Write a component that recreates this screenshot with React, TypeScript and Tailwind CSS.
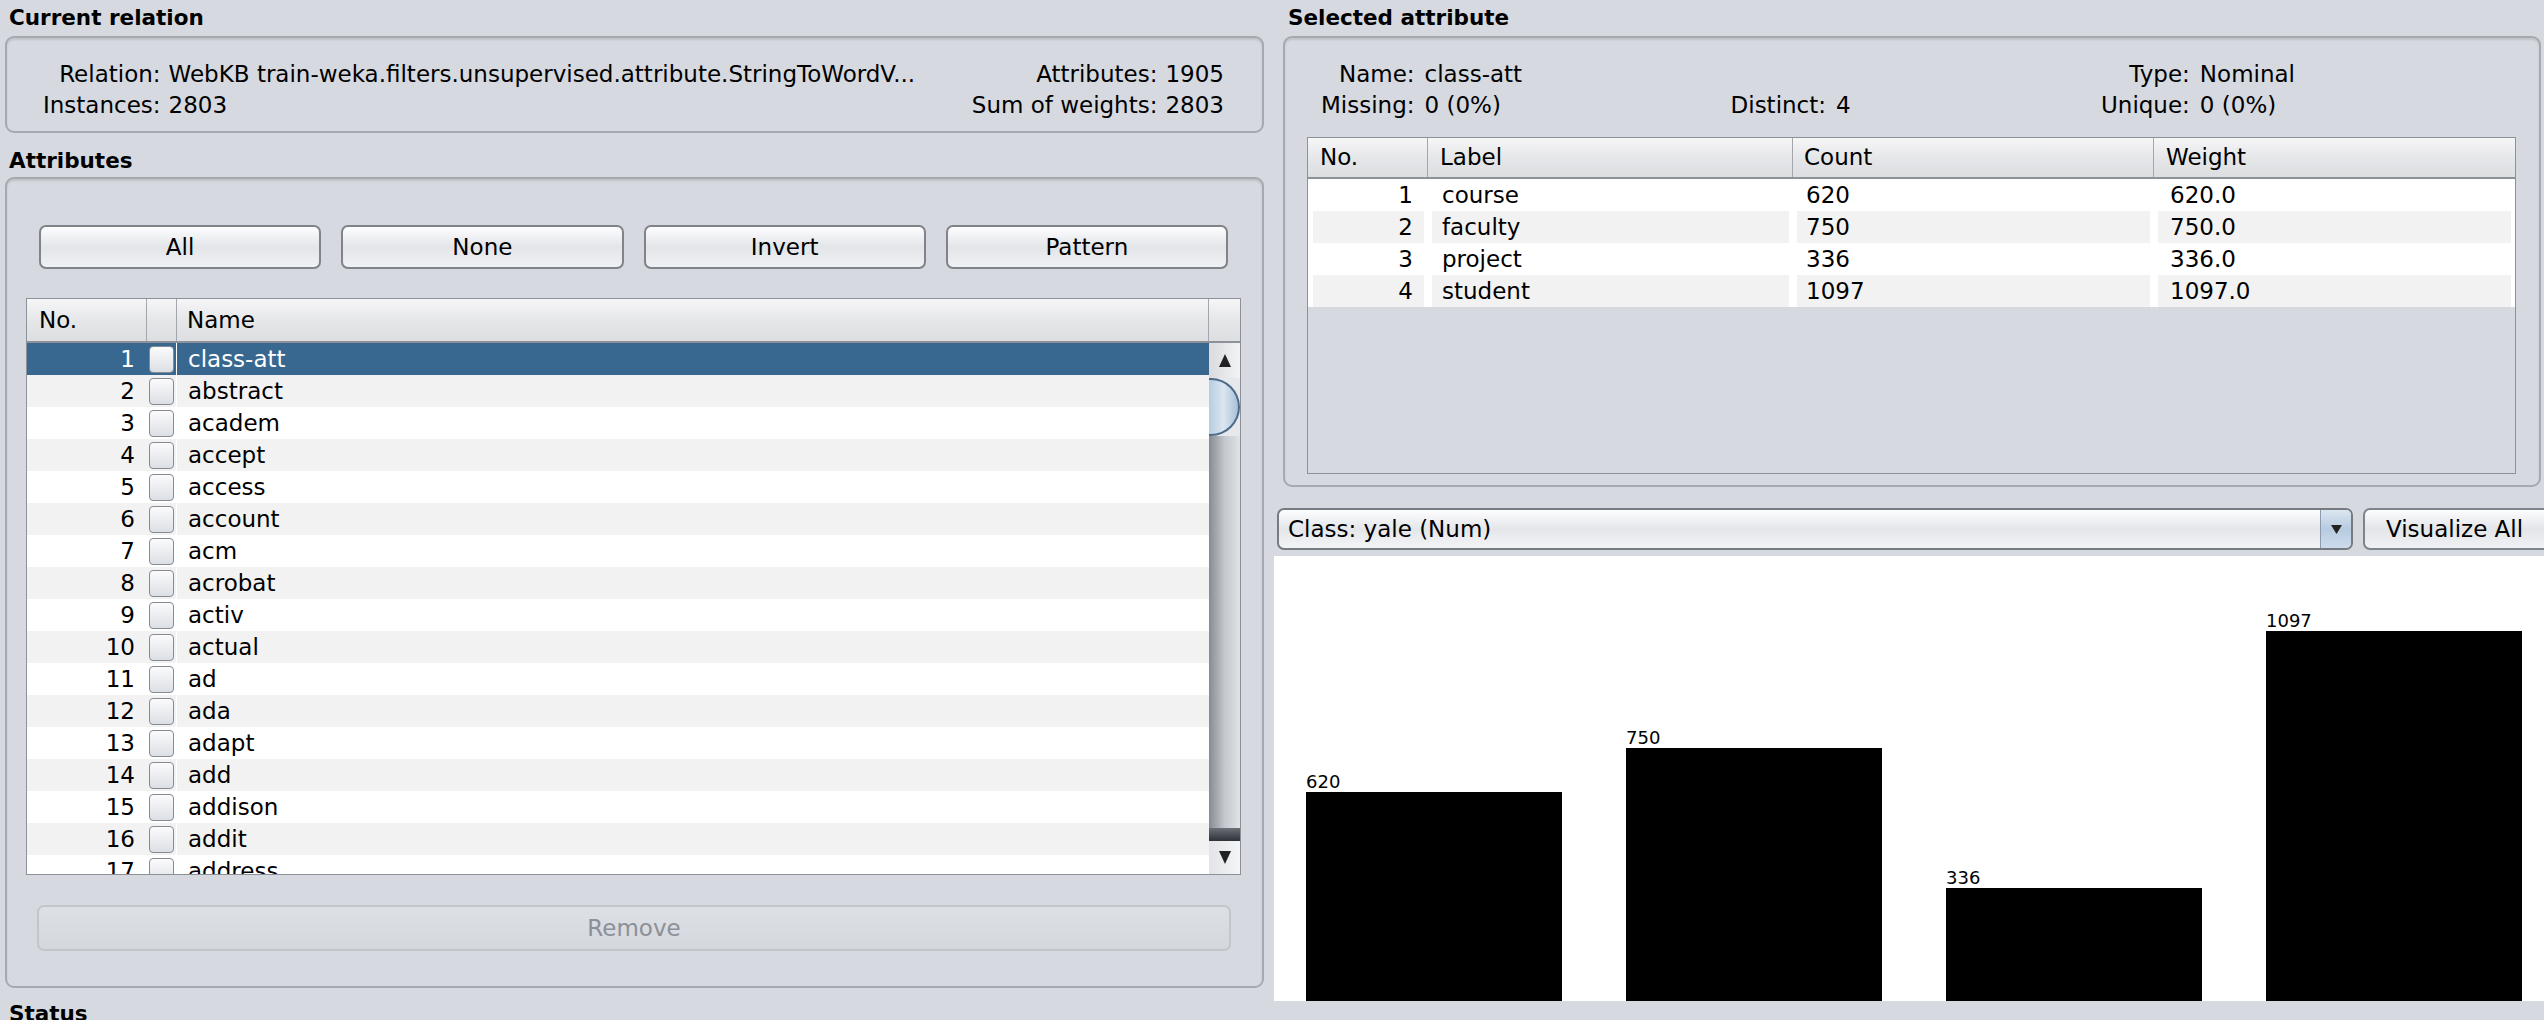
import React from 'react';

const attributes = [
  'class-att', 'abstract', 'academ', 'accept', 'access', 'account', 'acm', 'acrobat', 'activ',
  'actual', 'ad', 'ada', 'adapt', 'add', 'addison', 'addit', 'address',
];

const labels = [
  { no: 1, label: 'course', count: 620, weight: '620.0' },
  { no: 2, label: 'faculty', count: 750, weight: '750.0' },
  { no: 3, label: 'project', count: 336, weight: '336.0' },
  { no: 4, label: 'student', count: 1097, weight: '1097.0' },
];

const maxCount = 1097;

function Title({ children, className = '' }: { children: React.ReactNode; className?: string }) {
  return <div className={`pl-[9px] text-[21.5px] font-bold leading-[24px] ${className}`}>{children}</div>;
}

function Box({ children, className = '' }: { children: React.ReactNode; className?: string }) {
  return (
    <div
      className={`rounded-[9px] border-2 border-[#a5a9b0] shadow-[inset_0_2px_2px_rgba(0,0,0,0.10)] ${className}`}
    >
      {children}
    </div>
  );
}

function Button({ children, disabled = false, className = '' }: { children: React.ReactNode; disabled?: boolean; className?: string }) {
  return (
    <div
      className={
        disabled
          ? `flex items-center justify-center rounded-[7px] border-2 border-[#c2c5cb] bg-gradient-to-b from-[#dde0e5] to-[#d4d7dd] text-[#8c9096] ${className}`
          : `flex items-center justify-center rounded-[7px] border-2 border-[#7f838a] bg-gradient-to-b from-[#fdfdfe] via-[#e3e5e9] to-[#f0f1f4] ${className}`
      }
    >
      {children}
    </div>
  );
}

function Triangle({ up }: { up: boolean }) {
  return (
    <svg width="12" height="13" viewBox="0 0 12 13">
      {up ? <polygon points="6,0 12,13 0,13" fill="#222" /> : <polygon points="0,0 12,0 6,13" fill="#222" />}
    </svg>
  );
}

function Checkbox() {
  return (
    <div className="h-[27px] w-[25px] rounded-[4px] border border-[#868a92] bg-gradient-to-b from-[#fbfbfc] to-[#dcdfe4]" />
  );
}

function Scrollbar() {
  return (
    <div className="flex w-[31px] flex-col bg-[#e6e8eb]">
      <div className="flex h-[35px] items-center justify-center bg-gradient-to-r from-[#d9dbde] to-[#f2f3f4]">
        <Triangle up />
      </div>
      <div className="h-[58px] rounded-r-[30px] border-2 border-l-0 border-[#4a6a8a] bg-gradient-to-r from-[#b8cde0] via-[#dbe6f1] to-[#a9c0d8]" />
      <div className="flex-1 bg-gradient-to-r from-[#878b93] via-[#c4c7cc] to-[#e1e3e6]" />
      <div className="h-[13px] bg-gradient-to-b from-[#6c7078] to-[#2f3238]" />
      <div className="flex h-[33px] items-center justify-center bg-gradient-to-r from-[#e2e4e7] to-[#f4f5f6]">
        <Triangle up={false} />
      </div>
    </div>
  );
}

function AttributeTable() {
  return (
    <div className="ml-[19px] flex h-[577px] w-[1215px] flex-col overflow-hidden border border-[#8d9199] bg-white">
      <div className="flex h-[44px] shrink-0 border-b-2 border-[#8d9199] bg-gradient-to-b from-[#f6f6f7] via-[#e6e7e9] to-[#dcdee1]">
        <div className="flex w-[120px] items-center border-r border-[#a3a7ad] pl-[12px]">No.</div>
        <div className="w-[30px] border-r border-[#a3a7ad]" />
        <div className="flex flex-1 items-center border-r border-[#a3a7ad] pl-[10px]">Name</div>
        <div className="w-[31px]" />
      </div>
      <div className="flex flex-1 overflow-hidden">
        <div className="flex flex-1 flex-col overflow-hidden">
          {attributes.map((name, i) => {
            const selected = i === 0;
            const rowBg = selected ? 'bg-[#386890] text-white' : i % 2 === 1 ? 'bg-[#f2f2f2]' : 'bg-white';
            return (
              <div key={name} className={`flex h-[32px] shrink-0 items-center ${rowBg}`}>
                <div className="w-[120px] shrink-0 pr-[12px] text-right">{i + 1}</div>
                <div className="flex h-full w-[30px] shrink-0 items-center justify-center border-r border-white">
                  <Checkbox />
                </div>
                <div className="flex-1 pl-[11px]">{name}</div>
              </div>
            );
          })}
        </div>
        <Scrollbar />
      </div>
    </div>
  );
}

function LabelTable() {
  const cols = ['w-[120px]', 'w-[365px]', 'w-[361px]', 'flex-1'];
  return (
    <div className="ml-[22px] mt-[16px] flex h-[337px] w-[1209px] flex-col border border-[#8d9199]">
      <div className="flex h-[41px] shrink-0 border-b-2 border-[#8d9199] bg-gradient-to-b from-[#f6f6f7] via-[#e6e7e9] to-[#dcdee1]">
        <div className={`${cols[0]} flex items-center border-r border-[#a3a7ad] pl-[12px]`}>No.</div>
        <div className={`${cols[1]} flex items-center border-r border-[#a3a7ad] pl-[12px]`}>Label</div>
        <div className={`${cols[2]} flex items-center border-r border-[#a3a7ad] pl-[11px]`}>Count</div>
        <div className={`${cols[3]} flex items-center pl-[12px]`}>Weight</div>
      </div>
      {labels.map((r, i) => {
        const cell = i % 2 === 1 ? 'bg-[#f2f2f2]' : 'bg-white';
        return (
          <div key={r.no} className="flex h-[32px] items-stretch bg-white leading-[32px]">
            <div className={`${cols[0]} flex`}>
              <div className={`ml-[5px] mr-[4px] flex-1 pr-[11px] text-right ${cell}`}>{r.no}</div>
            </div>
            <div className={`${cols[1]} flex`}>
              <div className={`mx-[4px] flex-1 pl-[10px] ${cell}`}>{r.label}</div>
            </div>
            <div className={`${cols[2]} flex`}>
              <div className={`mx-[4px] flex-1 pl-[9px] ${cell}`}>{r.count}</div>
            </div>
            <div className={`${cols[3]} flex`}>
              <div className={`mx-[4px] flex-1 pl-[12px] ${cell}`}>{r.weight}</div>
            </div>
          </div>
        );
      })}
    </div>
  );
}

function Chart() {
  return (
    <div className="ml-[4px] mt-[6px] flex h-[445px] w-[1270px] items-end gap-[64px] bg-white pl-[32px]">
      {labels.map((r) => (
        <div key={r.no} className="flex w-[256px] flex-col">
          <div className="text-[18px] leading-[18px]">{r.count}</div>
          <div className="mt-[1px] bg-black" style={{ height: Math.round((r.count / maxCount) * 370) }} />
        </div>
      ))}
    </div>
  );
}

export default function App() {
  return (
    <div className="flex h-[1020px] w-[2544px] overflow-hidden bg-[#d6d9df] font-['DejaVu_Sans',sans-serif] text-[23px] text-black">
      <div className="flex w-[1270px] shrink-0 flex-col">
        <Title className="h-[36px] pt-[6px]">Current relation</Title>
        <Box className="ml-[5px] h-[97px] w-[1259px] pt-[21px]">
          <div className="grid grid-cols-[auto_1fr_auto_auto] gap-x-[8px] pl-[36px] pr-[38px] leading-[31px]">
            <div className="text-right">Relation:</div>
            <div className="truncate">WebKB train-weka.filters.unsupervised.attribute.StringToWordV...</div>
            <div className="text-right">Attributes:</div>
            <div>1905</div>
            <div className="text-right">Instances:</div>
            <div>2803</div>
            <div className="text-right">Sum of weights:</div>
            <div>2803</div>
          </div>
        </Box>
        <Title className="h-[44px] pt-[16px]">Attributes</Title>
        <Box className="ml-[5px] flex h-[811px] w-[1259px] flex-col pt-[46px]">
          <div className="ml-[32px] grid w-[1189px] grid-cols-4 gap-x-[20px]">
            <Button className="h-[44px]">All</Button>
            <Button className="h-[44px]">None</Button>
            <Button className="h-[44px]">Invert</Button>
            <Button className="h-[44px]">Pattern</Button>
          </div>
          <div className="mt-[29px]">
            <AttributeTable />
          </div>
          <Button disabled className="ml-[30px] mt-[30px] h-[46px] w-[1194px]">Remove</Button>
        </Box>
        <Title className="h-[32px] pt-[14px]">Status</Title>
      </div>

      <div className="flex flex-1 flex-col">
        <Title className="ml-[9px] h-[36px] pt-[6px]">Selected attribute</Title>
        <Box className="ml-[13px] h-[451px] w-[1258px] pt-[21px]">
          <div className="grid grid-cols-[auto_296px_auto_1fr_auto_auto] gap-x-[10px] pl-[36px] pr-[244px] leading-[31px]">
            <div className="text-right">Name:</div>
            <div>class-att</div>
            <div />
            <div />
            <div className="text-right">Type:</div>
            <div>Nominal</div>
            <div className="text-right">Missing:</div>
            <div>0 (0%)</div>
            <div className="text-right">Distinct:</div>
            <div>4</div>
            <div className="text-right">Unique:</div>
            <div>0 (0%)</div>
          </div>
          <LabelTable />
        </Box>
        <div className="ml-[7px] mt-[21px] flex h-[42px] items-stretch">
          <div className="flex w-[1076px] overflow-hidden rounded-[7px] border-2 border-[#767a81] bg-gradient-to-b from-[#fdfdfe] via-[#e4e6ea] to-[#f3f4f6]">
            <div className="flex flex-1 items-center pl-[9px]">Class: yale (Num)</div>
            <div className="flex w-[31px] items-center justify-center border-l border-[#8a9bb0] bg-gradient-to-b from-[#dbe6f1] via-[#b7cbe0] to-[#cddcec]">
              <svg width="11" height="11" viewBox="0 0 11 11">
                <polygon points="0,1 11,1 5.5,10" fill="#222" />
              </svg>
            </div>
          </div>
          <Button className="ml-[10px] w-[200px] justify-start rounded-r-none pl-[21px]">Visualize All</Button>
        </div>
        <Chart />
      </div>
    </div>
  );
}
